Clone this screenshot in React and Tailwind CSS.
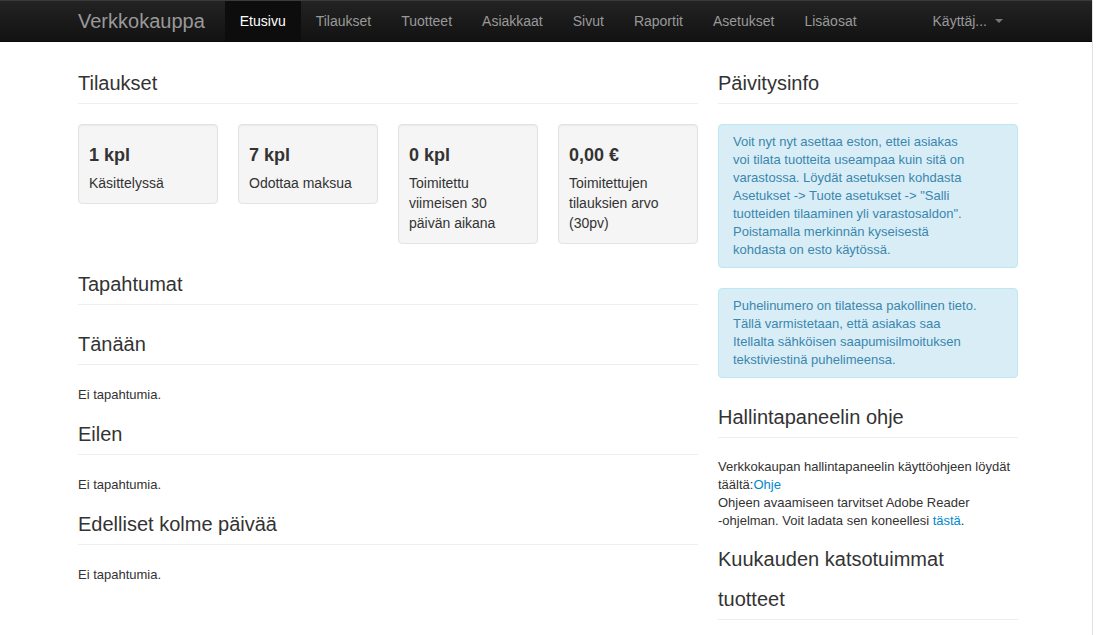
import React from 'react'

// Top navigation entries
const NAV = ['Etusivu', 'Tilaukset', 'Tuotteet', 'Asiakkaat', 'Sivut', 'Raportit', 'Asetukset', 'Lisäosat']

const STATS = [
  { value: '1 kpl', label: 'Käsittelyssä' },
  { value: '7 kpl', label: 'Odottaa maksua' },
  { value: '0 kpl', label: 'Toimitettu viimeisen 30 päivän aikana' },
  { value: '0,00 €', label: 'Toimitettujen tilauksien arvo (30pv)' },
]

function Heading({ children, className = '' }) {
  return (
    <h2 className={`text-[20px] leading-[40px] font-normal text-[#333] border-b border-[#eee] ${className}`}>
      {children}
    </h2>
  )
}

function Alert({ children, className = '' }) {
  return (
    <div
      className={`rounded-[4px] border border-[#bce8f1] bg-[#d9edf7] text-[#3a87ad] text-[13px] leading-[18px] pt-[8px] pb-[8px] pl-[14px] pr-[35px] ${className}`}
    >
      {children}
    </div>
  )
}

function Navbar() {
  return (
    <nav className="h-[42px] border-t border-[#3a3a3a] border-b border-b-[#0a0a0a] bg-linear-to-b from-[#232323] to-[#121212]">
      <div className="ml-[78px] w-[940px] h-[40px] flex items-stretch">
        <a className="text-[20px] leading-[40px] text-[#999] pr-[20px] whitespace-nowrap">Verkkokauppa</a>
        <ul className="flex">
          {NAV.map((item, i) => (
            <li
              key={item}
              className={`px-[15px] text-[14px] leading-[40px] ${
                i === 0 ? 'bg-[#0d0d0d] text-white' : 'text-[#999]'
              }`}
            >
              {item}
            </li>
          ))}
        </ul>
        <div className="ml-auto px-[15px] text-[14px] leading-[40px] text-[#999] flex items-center">
          Käyttäj...
          <span className="ml-[8px] inline-block w-0 h-0 border-t-[4px] border-t-[#777] border-x-[4px] border-x-transparent" />
        </div>
      </div>
    </nav>
  )
}

function StatCard({ value, label }) {
  return (
    <div className="rounded-[4px] border border-[#e3e3e3] bg-[#f5f5f5] shadow-[inset_0_1px_1px_rgba(0,0,0,0.05)] p-[10px]">
      <div className="mt-[9px] mb-[7px] text-[18px] leading-[22px] font-bold text-[#333]">{value}</div>
      <div className="text-[14px] leading-[20px] text-[#333]">{label}</div>
    </div>
  )
}

function EventSection({ title }) {
  return (
    <>
      <Heading className="mb-[20px]">{title}</Heading>
      <p className="text-[13px] leading-[20px] mb-[9px] text-[#333]">Ei tapahtumia.</p>
    </>
  )
}

export default function App() {
  return (
    <div className="w-[1093px] min-h-screen border-r border-[#e2e2e2] bg-white font-['Liberation_Sans',Arial,sans-serif] text-[#333]">
      <Navbar />

      <div className="ml-[78px] w-[940px] flex gap-[20px] pt-[21px]">
        {/* Left column */}
        <div className="w-[620px]">
          <Heading className="mb-[20px]">Tilaukset</Heading>
          <div className="grid grid-cols-4 gap-[20px] items-start">
            {STATS.map((s) => (
              <StatCard key={s.value} value={s.value} label={s.label} />
            ))}
          </div>

          <Heading className="mt-[20px] mb-[19px]">Tapahtumat</Heading>
          <EventSection title="Tänään" />
          <EventSection title="Eilen" />
          <EventSection title="Edelliset kolme päivää" />
        </div>

        {/* Right column */}
        <div className="w-[300px]">
          <Heading className="mb-[20px]">Päivitysinfo</Heading>
          <Alert className="mb-[20px]">
            Voit nyt nyt asettaa eston, ettei asiakas
            <br />
            voi tilata tuotteita useampaa kuin sitä on
            <br />
            varastossa. Löydät asetuksen kohdasta
            <br />
            Asetukset -&gt; Tuote asetukset -&gt; "Salli
            <br />
            tuotteiden tilaaminen yli varastosaldon".
            <br />
            Poistamalla merkinnän kyseisestä
            <br />
            kohdasta on esto käytössä.
          </Alert>
          <Alert className="mb-[19px]">
            Puhelinumero on tilatessa pakollinen tieto.
            <br />
            Tällä varmistetaan, että asiakas saa
            <br />
            Itellalta sähköisen saapumisilmoituksen
            <br />
            tekstiviestinä puhelimeensa.
          </Alert>

          <Heading className="mb-[20px]">Hallintapaneelin ohje</Heading>
          <p className="text-[13px] leading-[18px] mb-[9px] text-[#333]">
            Verkkokaupan hallintapaneelin käyttöohjeen löydät
            <br />
            täältä:<a className="text-[#0088cc]">Ohje</a>
            <br />
            Ohjeen avaamiseen tarvitset Adobe Reader
            <br />
            -ohjelman. Voit ladata sen koneellesi <a className="text-[#0088cc]">tästä</a>.
          </p>

          <Heading>
            Kuukauden katsotuimmat
            <br />
            tuotteet
          </Heading>
        </div>
      </div>
    </div>
  )
}
